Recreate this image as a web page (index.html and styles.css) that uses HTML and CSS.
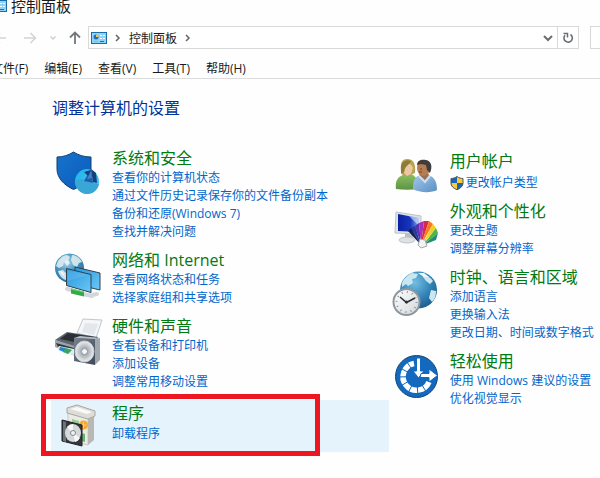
FILE: index.html
```html
<!DOCTYPE html>
<html lang="zh-CN">
<head>
    <meta charset="UTF-8">
    <meta name="viewport" content="width=device-width, initial-scale=1.0">
    <title>控制面板</title>
    <link rel="stylesheet" href="styles.css">
</head>
<body>
    <svg class="sprites" aria-hidden="true">
        <symbol id="panel" viewBox="0 0 16 12">
            <rect x="0.5" y="0.5" width="15" height="11" fill="#8fd3f7" stroke="#1c6ea8"/>
            <circle cx="5" cy="5" r="2.5" fill="#1f6fc0"/>
            <path d="M5 5V2.5A2.5 2.5 0 0 1 7.500 5z" fill="#f7c948"/>
            <path d="M9 3.500h2M12 3.500h2M9 6.500h2M12 6.500h2" stroke="#fff"/>
            <path d="M3 9.500h4" stroke="#f5a623"/>
            <path d="M9 9.500h4" stroke="#1f6fc0"/>
        </symbol>
        <symbol id="chevron" viewBox="0 0 8 8">
            <path d="M2 1l3 3-3 3" fill="none" stroke="#666" stroke-width="1.500"/>
        </symbol>
    </svg>

    <header>
        <div class="titlebar">
            <svg class="panel-icon"><use href="#panel"/></svg>
            <span>控制面板</span>
        </div>
        <div class="toolbar">
            <button type="button" class="nav" aria-label="后退">
                <svg width="14" height="14" viewBox="0 0 14 14"><path d="M13 7H2M7 2L2 7l5 5" fill="none" stroke="#d4d4d4" stroke-width="1.500"/></svg>
            </button>
            <button type="button" class="nav" aria-label="前进">
                <svg width="14" height="14" viewBox="0 0 14 14"><path d="M1 7h11M7.500 2l5 5-5 5" fill="none" stroke="#d4d4d4" stroke-width="1.500"/></svg>
            </button>
            <button type="button" class="nav recent" aria-label="最近浏览的位置">
                <svg width="8" height="8" viewBox="0 0 8 8"><path d="M1.500 2.500L4 5l2.500-2.500" fill="none" stroke="#d0d0d0" stroke-width="1.500"/></svg>
            </button>
            <button type="button" class="nav" aria-label="上移">
                <svg width="14" height="14" viewBox="0 0 14 14"><path d="M7 13V2M2 6.500L7 1.500l5 5" fill="none" stroke="#74787c" stroke-width="1.800"/></svg>
            </button>
            <div class="address">
                <svg class="panel-icon"><use href="#panel"/></svg>
                <svg class="chevron"><use href="#chevron"/></svg>
                <a href="#">控制面板</a>
                <svg class="chevron"><use href="#chevron"/></svg>
                <button type="button" class="drop" aria-label="以前的位置">
                    <svg width="10" height="10" viewBox="0 0 10 10"><path d="M1 3l4 4 4-4" fill="none" stroke="#6a6e72" stroke-width="2"/></svg>
                </button>
                <button type="button" class="refresh" aria-label="刷新">
                    <svg width="12" height="12" viewBox="0 0 12 12"><path d="M8.500 2.500A4.200 4.200 0 1 1 3 3.200" fill="none" stroke="#6a6e72" stroke-width="1.600"/><path d="M1.500 1.500H5.500V5.500" fill="none" stroke="#6a6e72" stroke-width="1.500"/></svg>
                </button>
            </div>
            <input type="search" class="search" aria-label="搜索控制面板">
        </div>
        <nav class="menu">
            <a href="#">文件(F)</a>
            <a href="#">编辑(E)</a>
            <a href="#">查看(V)</a>
            <a href="#">工具(T)</a>
            <a href="#">帮助(H)</a>
        </nav>
    </header>

    <main>
        <h1>调整计算机的设置</h1>
        <div class="columns">
            <div class="column">
                <section class="category">
                    <svg class="icon" viewBox="0 0 46 46">
                        <defs>
                            <linearGradient id="shieldFill" x1="0" y1="0" x2="1" y2="1"><stop offset="0" stop-color="#1673cf"/><stop offset="1" stop-color="#0a5cb8"/></linearGradient>
                            <linearGradient id="ballFill" x1="0" y1="0" x2="1" y2="1"><stop offset="0" stop-color="#22b4ea"/><stop offset="1" stop-color="#45c7f2"/></linearGradient>
                        </defs>
                        <path d="M18.500 1C14 4 8 6 2 6v12c0 9 7 16 16.500 20.500C29 34 36 27 36 18V6C29 6 23 4 18.500 1z" fill="url(#shieldFill)" stroke="#13416f"/>
                        <ellipse cx="32" cy="30.500" rx="12" ry="12.500" fill="url(#ballFill)"/>
                        <path d="M20 31c3-4 8-4 12 0l12 2c-1 6-6 10-12 10s-11-5-12-12z" fill="#38a7d6"/>
                        <path d="M36 18l5 4 1 10-4-1z" fill="#163f80"/>
                        <path d="M36 18l-7 12 9 2z" fill="#1e5cae"/>
                        <path d="M29 21l7-2-3 6z" fill="#163f80"/>
                        <path d="M36 20l1 7-5 1z" fill="#4c82ba"/>
                    </svg>
                    <div class="body">
                        <h2><a href="#">系统和安全</a></h2>
                        <ul>
                            <li><a href="#">查看你的计算机状态</a></li>
                            <li><a href="#">通过文件历史记录保存你的文件备份副本</a></li>
                            <li><a href="#">备份和还原(Windows 7)</a></li>
                            <li><a href="#">查找并解决问题</a></li>
                        </ul>
                    </div>
                </section>

                <section class="category">
                    <svg class="icon" viewBox="0 0 46 46">
                        <defs>
                            <radialGradient id="globeFill" cx="0.4" cy="0.3" r="0.7"><stop offset="0" stop-color="#a9d5ea"/><stop offset="0.500" stop-color="#4a97bf"/><stop offset="1" stop-color="#2a6d9b"/></radialGradient>
                            <linearGradient id="screenFill" x1="0" y1="0" x2="1" y2="1"><stop offset="0" stop-color="#2796dc"/><stop offset="1" stop-color="#6bc8f7"/></linearGradient>
                        </defs>
                        <circle cx="14.500" cy="15" r="14.500" fill="url(#globeFill)"/>
                        <path d="M3 8c3-4 6-6 9-6l3 2-2 4-4 1-1 4-4 2-3-2zM17 2c4 0 8 3 10 7l-3 1-2 4-4-2-2-5zM3 18l5-1 4 4-1 6c-4-1-7-5-8-9z" fill="#dcebf0" opacity="0.900"/>
                        <path d="M9 9l4-2 2 3-3 3zM4 18l4 1 2 5" fill="#fff" opacity="0.700"/>
                        <path d="M20 14l25 6v17l-25-6z" fill="url(#screenFill)" stroke="#31414e"/>
                        <path d="M11.500 15.500l24.500 6v18l-24.500-7z" fill="url(#screenFill)" stroke="#31414e"/>
                        <path d="M12.500 17l21 5-21 6z" fill="#7cc8f2" opacity="0.300"/>
                        <path d="M12 36l5 1M28 41l9 2M37 42l5-1" stroke="#d3d7da" stroke-width="4" stroke-linecap="round"/>
                        <path d="M16 35.500l13 3v5l-13-3z" fill="#31ab43"/>
                        <path d="M16 36l13 3" stroke="#79d77d"/>
                    </svg>
                    <div class="body">
                        <h2><a href="#">网络和 Internet</a></h2>
                        <ul>
                            <li><a href="#">查看网络状态和任务</a></li>
                            <li><a href="#">选择家庭组和共享选项</a></li>
                        </ul>
                    </div>
                </section>

                <section class="category">
                    <svg class="icon" viewBox="0 0 46 46">
                        <defs>
                            <linearGradient id="speakerFill" x1="0" y1="0" x2="1" y2="1"><stop offset="0" stop-color="#77828f"/><stop offset="1" stop-color="#3f4a58"/></linearGradient>
                            <radialGradient id="coneFill"><stop offset="0" stop-color="#fff"/><stop offset="0.350" stop-color="#a7adb2"/><stop offset="1" stop-color="#eef0f2"/></radialGradient>
                        </defs>
                        <path d="M28 0l19 1-6 18-19-5z" fill="#f4f6f8" stroke="#c2c7cc"/>
                        <path d="M30 4l13 1-4 11-12-3z" fill="#e2e7ec"/>
                        <path d="M12 13l31 5-1 6-24 4L0 21z" fill="#5d6670"/>
                        <path d="M13 14l26 4-20 5-14-3z" fill="#2c3036"/>
                        <path d="M0 21l20 6v10L0 28z" fill="#9ba3ab"/>
                        <path d="M1 24l18 5v4L3 28z" fill="#30363d"/>
                        <path d="M4 27l15 3v6L9 34l-7-4z" fill="#d9eff5"/>
                        <path d="M5 28l6 1-2 4-5-2z" fill="#2587d2"/>
                        <path d="M11 29l6 2-4 4-5-2z" fill="#3ba65b"/>
                        <path d="M19 19l21 1v26l-21-4z" fill="url(#speakerFill)"/>
                        <path d="M40 20l5-1v22l-5 5z" fill="#9fa7af"/>
                        <path d="M19 19l6-2 20 2-5 1z" fill="#b5bcc4"/>
                        <ellipse cx="29.500" cy="32.500" rx="9.500" ry="10.500" fill="url(#coneFill)" stroke="#c9ced3"/>
                        <circle cx="29.500" cy="32.500" r="3" fill="#f5f6f7" stroke="#8f969c"/>
                    </svg>
                    <div class="body">
                        <h2><a href="#">硬件和声音</a></h2>
                        <ul>
                            <li><a href="#">查看设备和打印机</a></li>
                            <li><a href="#">添加设备</a></li>
                            <li><a href="#">调整常用移动设置</a></li>
                        </ul>
                    </div>
                </section>

                <section class="category active">
                    <svg class="icon" viewBox="0 0 46 46">
                        <path d="M13 5l20 6v28l-20-5z" fill="#eceae6" stroke="#c9c8c2"/>
                        <path d="M33 11l6-2v25l-6 5z" fill="#b9b8b2"/>
                        <path d="M12 2l10-3 18 6v5l-7 3-21-6z" fill="#dddcd7" stroke="#a8a8a2"/>
                        <path d="M15 3l7-2 15 5-5 2z" fill="#f9f9f7"/>
                        <path d="M17 13l7 2v8l-7-2z" fill="#9ccb97"/>
                        <circle cx="28.500" cy="19" r="4.500" fill="#f3aa2c"/>
                        <path d="M28.500 16v6M25.500 19h6" stroke="#f9d17e"/>
                        <path d="M22 26l8 2v8l-8-2z" fill="#69b578"/>
                        <path d="M7 14l20 5v21L7 35z" fill="#33373b" stroke="#1e2124"/>
                        <path d="M8 15l3 1v20l-3-1z" fill="#6e7377"/>
                        <ellipse cx="18" cy="27" rx="8" ry="9" fill="#d5d9dc"/>
                        <path d="M18 27l-6-6a8 9 0 0 1 6-3zM18 27l7 5a8 9 0 0 1-5 4z" fill="#f7f8f8"/>
                        <circle cx="18" cy="27" r="2.500" fill="#f2f2f2" stroke="#83898e"/>
                    </svg>
                    <div class="body">
                        <h2><a href="#">程序</a></h2>
                        <ul>
                            <li><a href="#">卸载程序</a></li>
                        </ul>
                    </div>
                    <div class="mark"></div>
                </section>
            </div>

            <div class="column right">
                <section class="category users">
                    <svg class="icon" viewBox="0 0 46 46">
                        <defs>
                            <linearGradient id="greenFill" x1="0" y1="0" x2="0" y2="1"><stop offset="0" stop-color="#8fbf62"/><stop offset="1" stop-color="#5c9344"/></linearGradient>
                            <linearGradient id="blueFill" x1="0" y1="0" x2="1" y2="1"><stop offset="0" stop-color="#a4c8ea"/><stop offset="1" stop-color="#5b8fc4"/></linearGradient>
                        </defs>
                        <path d="M3 35c-1-7 1-12 7-14l8-1c5 2 7 6 8 15-8 1-16 1-23 0z" fill="url(#greenFill)"/>
                        <path d="M8 18C7 9 9 5 14 5c6 0 9 4 8 14l-5 2-7 1z" fill="#b7a452"/>
                        <path d="M13 10c3-1 6 0 7 4l-2 6-4 2-3-3z" fill="#edc7a1"/>
                        <path d="M8 12c1-5 6-7 10-5-2 5-6 4-7 11l-3 2z" fill="#8d7c37"/>
                        <path d="M20 35c0-7 1-11 5-13l9-1c6 1 10 5 10 15-5 3-18 3-24-1z" fill="url(#blueFill)"/>
                        <path d="M26 21l6 5 4-5-2-4h-6z" fill="#a66c45"/>
                        <ellipse cx="30.500" cy="14" rx="6.500" ry="8" fill="#b67c52"/>
                        <path d="M24 11c0-5 5-6 9-5 5 1 7 6 4 13l-3-3-1-5-5-1z" fill="#403c3b"/>
                        <path d="M27 15h2M26 18h3" stroke="#704329"/>
                        <path d="M26 22l6 6 5-6" fill="none" stroke="#cce0f2" stroke-width="2"/>
                    </svg>
                    <div class="body">
                        <h2><a href="#">用户帐户</a></h2>
                        <ul>
                            <li><a href="#"><svg class="uac" viewBox="0 0 14 14"><path d="M7 0.500C5 2 3 2.500 1 2.500V7c0 3 2 5 6 6.800V0.500z" fill="#1766bb"/><path d="M7 0.500c2 1.500 4 2 6 2V7c0 3-2 5-6 6.800z" fill="#f9c936"/><path d="M1 7h6v6.800C3.500 12 1 10 1 7z" fill="#f9c936"/><path d="M7 7h6c0 3-2 5-6 6.800z" fill="#1766bb"/><path d="M7 0.500C5 2 3 2.500 1 2.500V7c0 3 2 5 6 6.800C11 12 13 10 13 7V2.500c-2 0-4-0.500-6-2z" fill="none" stroke="#4b5358"/></svg>更改帐户类型</a></li>
                        </ul>
                    </div>
                </section>

                <section class="category">
                    <svg class="icon" viewBox="0 0 46 46">
                        <defs>
                            <linearGradient id="monitorFill" x1="0" y1="0" x2="1" y2="0"><stop offset="0" stop-color="#0a20a0"/><stop offset="0.600" stop-color="#1737bd"/><stop offset="1" stop-color="#8aa5ed"/></linearGradient>
                        </defs>
                        <path d="M12 29l8 2v5l-8-1z" fill="#b9bec3"/>
                        <ellipse cx="14" cy="36" rx="8" ry="3" fill="#dde1e4" stroke="#bfc4c8"/>
                        <path d="M3 8l25 4v18L2 29z" fill="#dfe3e6" stroke="#bcc2c6"/>
                        <path d="M5 10l21 4v14l-21-1z" fill="url(#monitorFill)"/>
                        <path d="M16 12l10 2v8z" fill="#d6e0fb" opacity="0.650"/>
                        <path d="M28 41L18 24l4-2z" fill="#253a9d"/>
                        <path d="M18 24l-3 3 13 14z" fill="#121e58"/>
                        <path d="M28 41l-6-19 4-3z" fill="#5933ad"/>
                        <path d="M28 41l-2-22 5-2z" fill="#a62fbd"/>
                        <path d="M28 41l3-24 5 0z" fill="#dc2942"/>
                        <path d="M28 41l8-24 4 3z" fill="#f47b20"/>
                        <path d="M29 41l11-21 3 4z" fill="#f2d021"/>
                        <path d="M30 41l13-17 2 5z" fill="#54b543"/>
                        <path d="M30 41l15-12-2 7z" fill="#238c79"/>
                        <path d="M27 35l5 1 2 6-6 2-3-3z" fill="#f2f2f2" stroke="#a5a9ad"/>
                    </svg>
                    <div class="body">
                        <h2><a href="#">外观和个性化</a></h2>
                        <ul>
                            <li><a href="#">更改主题</a></li>
                            <li><a href="#">调整屏幕分辨率</a></li>
                        </ul>
                    </div>
                </section>

                <section class="category">
                    <svg class="icon" viewBox="0 0 46 46">
                        <defs>
                            <radialGradient id="earthFill" cx="0.400" cy="0.300" r="0.700"><stop offset="0" stop-color="#74bfe0"/><stop offset="0.600" stop-color="#3485b9"/><stop offset="1" stop-color="#205f91"/></radialGradient>
                            <linearGradient id="dialFill" x1="0" y1="0" x2="1" y2="1"><stop offset="0" stop-color="#fff"/><stop offset="1" stop-color="#d3d7da"/></linearGradient>
                        </defs>
                        <circle cx="25.500" cy="20" r="18.500" fill="url(#earthFill)"/>
                        <path d="M9 13c2-5 6-8 10-10l6 1-2 4-4 1 1 4-5 3-2-2-4 3zM29 4c5 1 9 4 11 7l-3 3-4-3-3-4zM38 20l5 1c0 5-1 8-4 11l-3-4z" fill="#c9e7f1"/>
                        <path d="M25 3l6 0 5 4-5 0z" fill="#eff8fa"/>
                        <circle cx="13.500" cy="32" r="13" fill="url(#dialFill)" stroke="#8f969c" stroke-width="2"/>
                        <circle cx="13.500" cy="32" r="10" fill="none" stroke="#8c9297" stroke-width="2" stroke-dasharray="1 4.236"/>
                        <path d="M7 27l6.500 5.500L22 28" fill="none" stroke="#2b2f33" stroke-width="1.500"/>
                        <circle cx="13.500" cy="32" r="1.500" fill="#2b2f33"/>
                    </svg>
                    <div class="body">
                        <h2><a href="#">时钟、语言和区域</a></h2>
                        <ul>
                            <li><a href="#">添加语言</a></li>
                            <li><a href="#">更换输入法</a></li>
                            <li><a href="#">更改日期、时间或数字格式</a></li>
                        </ul>
                    </div>
                </section>

                <section class="category">
                    <svg class="icon" viewBox="0 0 46 46">
                        <circle cx="23.500" cy="22.500" r="21" fill="#1269bd" stroke="#134778"/>
                        <path d="M21 9.500A13.500 13.500 0 1 0 36 28" fill="none" stroke="#fff" stroke-width="5.500"/>
                        <path d="M23.500 22.500L12 5M23.500 22.500L5 13M23.500 22.500L4 23M23.500 22.500L6 33M23.500 22.500L14 41M23.500 22.500L25 42M23.500 22.500L34 39" stroke="#1269bd"/>
                        <path d="M23.500 4h4v13h3.500l-5.500 7-5.500-7h3.500z" fill="#fff" stroke="#1269bd"/>
                        <path d="M28 19.500h8v-4.500l8.500 6.500-8.500 6.500v-4.500h-9z" fill="#fff" stroke="#1269bd"/>
                    </svg>
                    <div class="body">
                        <h2><a href="#">轻松使用</a></h2>
                        <ul>
                            <li><a href="#">使用 Windows 建议的设置</a></li>
                            <li><a href="#">优化视觉显示</a></li>
                        </ul>
                    </div>
                </section>
            </div>
        </div>
    </main>
</body>
</html>
```

FILE: styles.css
```css
* {
    box-sizing: border-box;
}
body {
    margin: 0;
    min-height: 100vh;
    background-color: #fefefe;
    color: #1a1a1a;
    font-family: "Open Sans", "Noto Sans CJK SC", sans-serif;
    font-size: 12px;
    overflow-x: hidden;
}
a {
    color: inherit;
    text-decoration: none;
}
a:hover {
    text-decoration: underline;
}
button {
    padding: 0;
    border: none;
    background: none;
    display: flex;
    align-items: center;
    justify-content: center;
}
.sprites {
    display: none;
}
.panel-icon {
    width: 16px;
    height: 12px;
    flex: none;
}

/* title bar */
.titlebar {
    display: flex;
    align-items: center;
    gap: 4px;
    height: 12px;
    margin: 0 0 14px -9px;
    font-size: 15px;
    line-height: 12px;
}

/* toolbar */
.toolbar {
    display: flex;
    align-items: center;
    height: 23px;
    margin-left: -7px;
    overflow: hidden;
}
.nav {
    width: 14px;
    height: 22px;
    margin-right: 16px;
}
.nav.recent {
    width: 8px;
    margin: 0 11px 0 -4px;
}
.nav.recent + .nav {
    margin-right: 6px;
}
.nav svg {
    flex: none;
}
.address {
    flex: 1;
    display: flex;
    align-items: center;
    height: 23px;
    padding-left: 2px;
    border: 1px solid #d9d9d9;
    background-color: #fff;
}
.chevron {
    width: 8px;
    height: 8px;
    margin: 0 7px;
}
.drop {
    width: 18px;
    height: 21px;
    margin-left: auto;
}
.refresh {
    width: 21px;
    height: 21px;
    border-left: 1px solid #d3dcdc;
}
.search {
    width: 200px;
    height: 23px;
    margin: 0 -190px 0 11px;
    border: 1px solid #d9d9d9;
    background-color: #fff;
}

/* menu bar */
.menu {
    display: flex;
    gap: 16px;
    margin-left: -9px;
    padding: 11px 0 0;
    height: 30px;
    line-height: 18px;
    border-bottom: 1px solid #dcdcdc;
    white-space: nowrap;
}

/* content */
main {
    padding: 19px 0 22px 51px;
}
h1 {
    margin: 0 0 0 1px;
    color: #003399;
    font-size: 16px;
    font-weight: normal;
    line-height: 20px;
}
.columns {
    display: grid;
    grid-template-columns: 8fr 5fr;
    padding-top: 30px;
}
.right {
    padding-top: 3px;
}
.category {
    display: flex;
    align-items: flex-start;
    gap: 11px;
    padding-left: 4px;
    white-space: nowrap;
}
.icon {
    width: 46px;
    height: 46px;
    margin-top: 3px;
    flex: none;
    overflow: visible;
}
.body {
    padding-bottom: 9px;
}
h2 {
    margin: 0;
    color: #007a12;
    font-size: 16px;
    font-weight: normal;
    line-height: 20px;
}
ul {
    margin: 0;
    padding: 1px 0 0;
    list-style: none;
    color: #0066cc;
    line-height: 18px;
}
li a {
    display: flex;
    align-items: center;
}
.users ul {
    padding-top: 3px;
}
.uac {
    width: 14px;
    height: 14px;
    margin-right: 2px;
}

/* highlighted category with the red frame over it */
.active {
    position: relative;
    padding-top: 3px;
    background-color: #e5f3fd;
}
.active ul {
    padding-top: 2px;
}
.mark {
    position: absolute;
    top: -6px;
    right: 69px;
    bottom: -4px;
    left: -10px;
    border: 5px solid #ee1620;
}
```
